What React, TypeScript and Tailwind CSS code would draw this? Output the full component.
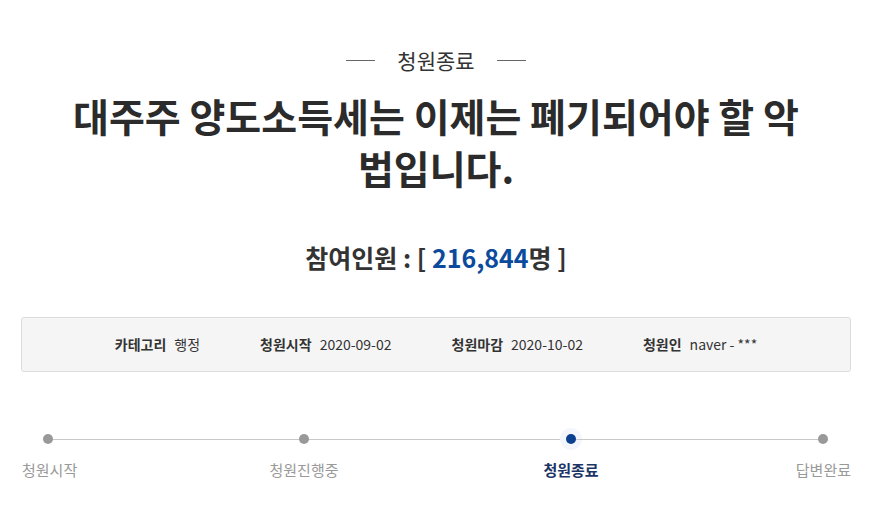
import React from 'react';

const font = { fontFamily: '"Noto Sans CJK KR", "Noto Sans", sans-serif' };

const infoItems = [
    { label: '카테고리', value: '행정' },
    { label: '청원시작', value: '2020-09-02' },
    { label: '청원마감', value: '2020-10-02' },
    { label: '청원인', value: 'naver - ***' },
];

const App: React.FC = () => {
    return (
        <div className="bg-white w-[880px] h-[524px] overflow-hidden" style={font}>
            <div className="ml-[21px] w-[830px] pt-[45px]">
                {/* status */}
                <div className="flex items-center justify-center h-[30px]">
                    <span className="w-[29px] h-px bg-[#666]"></span>
                    <span className="mx-[22px] text-[21px] leading-[30px] text-[#333]">청원종료</span>
                    <span className="w-[29px] h-px bg-[#666]"></span>
                </div>

                {/* title */}
                <h1 className="mx-auto mt-[14px] w-[790px] text-center text-[39px] font-bold leading-[52px] text-[#2b2b2b] break-keep">
                    대주주 양도소득세는 이제는 폐기되어야 할 악 법입니다.
                </h1>

                {/* count */}
                <div className="mt-[46px] text-center text-[25px] font-bold leading-[36px] text-[#333]">
                    참여인원 : [ <span className="text-[#0b4a9c]">216,844</span>명 ]
                </div>

                {/* info box */}
                <div className="mt-[42px] h-[55px] rounded-[3px] border border-[#dcdcdc] bg-[#f5f5f5] flex items-center justify-center gap-[60px]">
                    {infoItems.map((item) => (
                        <div key={item.label} className="flex items-center gap-[8px] text-[14px] text-[#333]">
                            <span className="font-bold">{item.label}</span>
                            <span>{item.value}</span>
                        </div>
                    ))}
                </div>

                {/* progress */}
                <div className="mt-[62px] flex items-center h-[10px]">
                    <span className="ml-[22px] w-[10px] h-[10px] rounded-full bg-[#999]"></span>
                    <span className="w-[246px] h-px bg-[#c8c8c8]"></span>
                    <span className="w-[10px] h-[10px] rounded-full bg-[#999]"></span>
                    <span className="w-[257px] h-px bg-[#c8c8c8]"></span>
                    <span className="w-[10px] h-[10px] rounded-full bg-[#0b3f8f] ring-[6px] ring-[#f3f7fc]"></span>
                    <span className="w-[242px] h-px bg-[#c8c8c8]"></span>
                    <span className="w-[10px] h-[10px] rounded-full bg-[#999]"></span>
                </div>
                <div className="mt-[16px] flex text-[15px] leading-[20px] text-[#999]">
                    <div className="w-[100px] pl-[1px] text-left">청원시작</div>
                    <div className="ml-[133px] w-[100px] text-center">청원진행중</div>
                    <div className="ml-[167px] w-[100px] text-center font-bold text-[#1b3566]">청원종료</div>
                    <div className="ml-[130px] w-[100px] text-right">답변완료</div>
                </div>
            </div>
        </div>
    );
};

export default App;
